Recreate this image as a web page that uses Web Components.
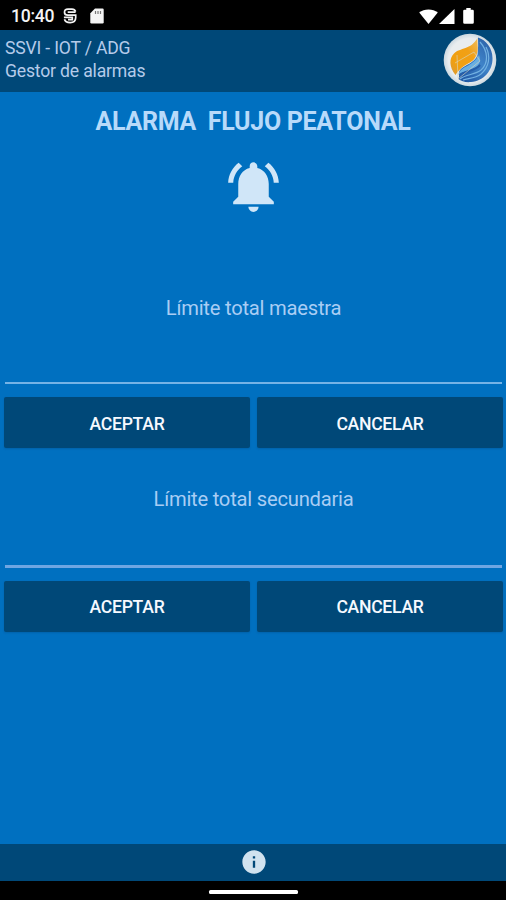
<!DOCTYPE html>
<html lang="es">
<head>
<meta charset="utf-8">
<title>Gestor de alarmas</title>
<style>
html,body{margin:0;height:100%;background:#0070c0}
body{font-family:Roboto,"Liberation Sans",sans-serif;overflow:hidden}
</style>
</head>
<body>
<alarm-app>
  <status-bar>10:40</status-bar>
  <app-header><span slot="title">SSVI - IOT / ADG</span><span slot="subtitle">Gestor de alarmas</span></app-header>
  <alarm-title>ALARMA&nbsp; FLUJO PEATONAL</alarm-title>
  <limit-form style="--label-h:24px;--field-h:62px;--line:2px;--line-color:#75b3e6;--gap:13px">Límite total maestra</limit-form>
  <limit-form class="second" style="--label-h:24px;--field-h:54px;--line:3px;--line-color:#6fa6e2;--gap:13px">Límite total secundaria</limit-form>
  <app-footer></app-footer>
  <nav-bar></nav-bar>
</alarm-app>
<script>
function define(name, html) {
  customElements.define(name, class extends HTMLElement {
    constructor() {
      super();
      this.attachShadow({ mode: 'open' }).innerHTML = html;
    }
  });
}

define('alarm-app', `
<style>
:host{display:flex;flex-direction:column;width:506px;height:900px;background:#0070c0}
::slotted(app-footer){margin-top:auto}
::slotted(limit-form.second){margin-top:38.500px}
</style><slot></slot>`);

define('status-bar', `
<style>
:host{display:flex;align-items:center;height:30px;background:#000;color:#f4f4f4;font-size:17.6px;letter-spacing:-.3px;font-weight:500;padding:2px 32px 0 11px;box-sizing:border-box}
svg{display:block;flex:none}
.s{margin-left:9px}.sd{margin-left:13px}.w{margin-left:auto}.g{margin-left:1px}.b{margin-left:8px}
</style>
<slot></slot>
<svg class="s" width="14" height="16" viewBox="0 0 14 16" fill="none" stroke="#f4f4f4" stroke-width="1.700"><path d="M12.600 3.600C12 1.900 10.800 1.100 9 1.100H5C2.600 1.100 1.500 2.400 1.500 4.200S2.700 7.200 4.800 7.200H12.700V9.500C12.700 12.800 10.800 14.600 7.200 14.600C4 14.600 2 13.300 1.500 11.200"/><path d="M4.700 4.200H12.600M.9 9.300H9.300V11.600H5"/></svg>
<svg class="sd" width="14" height="16" viewBox="0 0 14 16"><path fill="#f4f4f4" d="M5 .5h7.500Q13.700.5 13.700 1.700v12.600q0 1.200-1.200 1.200h-11Q.3 15.500.3 14.300V5.200z"/><path stroke="#777" stroke-width="1.200" d="M5.500 3v3M8 3v3M10.500 3v3"/></svg>
<svg class="w" width="19" height="15" viewBox="0 0 19 15"><path fill="#fff" d="M9.500 15 .2 3.600C5.200-.7 13.800-.7 18.800 3.600z"/></svg>
<svg class="g" width="16" height="15" viewBox="0 0 16 15"><path fill="#fff" d="M0 15 15.500 0V15z"/></svg>
<svg class="b" width="11" height="16" viewBox="0 0 11 16"><path fill="#fff" d="M3.300 0h4.400v1.700H9.500q1.300 0 1.300 1.300v11.500q0 1.300-1.300 1.300h-8Q.2 15.800.2 14.500V3q0-1.300 1.300-1.300h1.800z"/></svg>`);

define('brand-logo', `
<style>:host{display:block;width:54px;height:54px}svg{display:block}</style>
<svg width="54" height="54" viewBox="0 0 54 54">
<defs>
<radialGradient id="r"><stop offset=".82" stop-color="#e9edef"/><stop offset="1" stop-color="#cbd8e0"/></radialGradient>
<linearGradient id="o" x1="1" y1="0" x2="0" y2="1"><stop offset="0" stop-color="#efbd5c"/><stop offset=".35" stop-color="#f1a016"/><stop offset=".75" stop-color="#f0a010"/><stop offset="1" stop-color="#d89a40"/></linearGradient>
<linearGradient id="b" x1=".9" y1="0" x2=".2" y2="1"><stop offset="0" stop-color="#2a5ea6"/><stop offset=".5" stop-color="#3f83c8"/><stop offset="1" stop-color="#2058a4"/></linearGradient>
</defs>
<circle cx="27" cy="27" r="26.300" fill="url(#r)"/>
<path fill="url(#b)" d="M35 4.500C43 7 49.500 15 49.500 25C50 37 41 48 28 49C23 49.500 18 48.500 15.500 46C17 42 15 40 17 37C22 31 31 31 34.500 22Q35.500 12 35 4.500z"/>
<path fill="url(#o)" d="M34.500 5C34 11 36 16 33.500 22C31 29 25 30 21 33C17 36 15 38 12.500 42C6 34 6 25 11 20.500C17 14.500 28 17 34.500 5z"/>
<path fill="#69afe1" d="M15 42C18 34 24 34 29 30C33 27 34.500 25 36 22C38.500 28 36 34 30 36C24 38 18 39 15 42z"/>
<path fill="none" stroke="#255ea9" stroke-width="2" d="M17 42C24 37 32 38 37 32"/>
<path fill="none" stroke="#72b1e2" stroke-width="1.200" d="M37 9C45 18 46 30 38 37C32 42 23 41 17 46M43 14C48 24 46 34 38 41C32 46 24 45 20 47"/>
<path fill="none" stroke="#d5d4bd" stroke-opacity=".7" stroke-width=".9" d="M14 22L15 45M12 30L31 19L37 28L15 46"/>
</svg>`);

define('app-header', `
<style>
:host{display:flex;justify-content:space-between;height:62px;background:#004878;box-sizing:border-box;padding:3px 9px 0 5px;color:#b5cbea;font-size:17.6px;letter-spacing:-.18px;line-height:23px}
.text{display:flex;flex-direction:column;padding-top:3.500px}
</style>
<div class="text"><slot name="title"></slot><slot name="subtitle"></slot></div><brand-logo></brand-logo>`);

define('alarm-title', `
<style>
:host{display:flex;flex-direction:column;align-items:center;height:204px;color:#b8dafa;font-size:25px;letter-spacing:-.3px;font-weight:700;line-height:30px;padding-top:15px;box-sizing:border-box}
svg{display:block;margin-top:19px;fill:#d0e6f8}
</style>
<div><slot></slot></div>
<svg width="61" height="61" viewBox="0 0 24 24"><path d="M7.580 4.080L6.150 2.650C3.750 4.480 2.170 7.300 2.030 10.500h2c.15-2.650 1.510-4.970 3.550-6.420zm12.390 6.420h2c-.15-3.200-1.730-6.020-4.120-7.850l-1.420 1.430c2.020 1.450 3.390 3.770 3.540 6.420zM18 11c0-3.070-1.640-5.640-4.500-6.320V4c0-.83-.67-1.500-1.500-1.500s-1.500.67-1.500 1.500v.68C7.630 5.360 6 7.920 6 11v5l-2 2v1h16v-1l-2-2v-5zm-6 11c.14 0 .27-.01.4-.04.65-.14 1.180-.58 1.440-1.180.1-.24.15-.5.15-.78h-4c.01 1.100.9 2 2.010 2z"/></svg>`);

define('action-button', `
<style>
:host{display:flex;align-items:center;justify-content:center;height:51px;background:#004878;border-radius:2px;color:#f6f9ff;font-size:17.600px;letter-spacing:-.28px;font-weight:500;box-shadow:0 1px 2px #00488055;padding-top:2px;box-sizing:border-box}
</style><slot></slot>`);

define('limit-form', `
<style>
:host{display:block;padding:0 3px 0 4px}
.label{text-align:center;height:var(--label-h);line-height:24px;font-size:20.200px;letter-spacing:-.23px;color:#a9cdf4}
.field{height:var(--field-h);margin:0 1px var(--gap);border-bottom:var(--line) solid var(--line-color)}
.row{display:grid;grid-template-columns:1fr 1fr;gap:7px}
</style>
<div class="label"><slot></slot></div>
<div class="field"></div>
<div class="row"><action-button>ACEPTAR</action-button><action-button>CANCELAR</action-button></div>`);

define('app-footer', `
<style>
:host{display:flex;align-items:center;justify-content:center;height:37px;background:#004878;padding:0 0 1px 1px;box-sizing:border-box}
svg{display:block}
</style>
<svg width="28" height="28" viewBox="0 0 24 24"><path fill="#d0e2ef" d="M12 2C6.480 2 2 6.480 2 12s4.480 10 10 10 10-4.480 10-10S17.520 2 12 2zm1 15h-2v-6h2v6zm0-8h-2V7h2v2z"/></svg>`);

define('nav-bar', `
<style>
:host{display:flex;align-items:center;justify-content:center;height:19px;background:#000;padding-top:2px;box-sizing:border-box}
i{display:block;width:89px;height:4px;border-radius:1.500px;background:#fff}
</style><i></i>`);
</script>
</body>
</html>
